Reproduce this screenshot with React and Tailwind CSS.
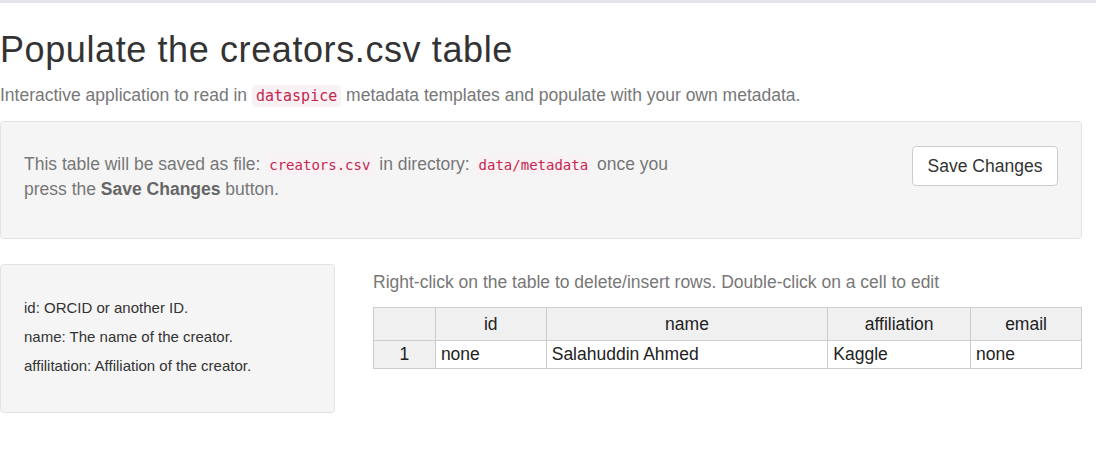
import React from "react";

const Code = ({ size = "text-[14px]", children }) => (
  <code
    className={`${size} rounded-[4px] bg-[#f9f2f4] px-[4px] py-[2px] font-['DejaVu_Sans_Mono','Liberation_Mono',monospace] text-[#c7254e]`}
  >
    {children}
  </code>
);

const columns = [
  { key: "id", w: "w-[111px]" },
  { key: "name", w: "w-[282px]" },
  { key: "affiliation", w: "w-[143px]" },
  { key: "email", w: "w-[111px]" },
];

const rows = [
  { id: "none", name: "Salahuddin Ahmed", affiliation: "Kaggle", email: "none" },
];

export default function App() {
  return (
    <div className="min-h-[467px] border-t-[3px] border-[#e3e3e8] bg-white pr-[14px] font-['Liberation_Sans',Arial,sans-serif] text-[#333]">
      {/* page title */}
      <h1 className="mt-[27px] text-[36px] leading-[40px] tracking-[0.6px] text-[#333]">
        Populate the creators.csv table
      </h1>
      <p className="mt-[14px] text-[17.5px] leading-[22px] text-[#777]">
        Interactive application to read in{" "}
        <Code size="text-[15px]">dataspice</Code> metadata templates and
        populate with your own metadata.
      </p>

      {/* save panel */}
      <div className="mt-[14px] flex h-[118px] items-start justify-between rounded-[4px] border border-[#e3e3e3] bg-[#f5f5f5] pl-[23px] pr-[23px] pt-[24px]">
        <p className="mt-[6px] w-[670px] text-[17.5px] leading-[24px] text-[#777]">
          This table will be saved as file: <Code>creators.csv</Code> in
          directory: <Code>data/metadata</Code> once you press the{" "}
          <b className="text-[#666]">Save Changes</b> button.
        </p>
        <button className="h-[40px] w-[146px] rounded-[4px] border border-[#ccc] bg-white text-[17.5px] text-[#333]">
          Save Changes
        </button>
      </div>

      <div className="mt-[25px] flex gap-[38px]">
        {/* column help */}
        <div className="flex h-[149px] w-[335px] flex-col gap-[9px] rounded-[4px] border border-[#e3e3e3] bg-[#f5f5f5] pl-[23px] pt-[33px] text-[15px] leading-[20px] text-[#333]">
          <p>id: ORCID or another ID.</p>
          <p>name: The name of the creator.</p>
          <p>affilitation: Affiliation of the creator.</p>
        </div>

        <div className="flex-1">
          <p className="mt-[7px] text-[17.5px] leading-[22px] text-[#777]">
            Right-click on the table to delete/insert rows. Double-click on a
            cell to edit
          </p>
          <table className="mt-[14px] border-collapse text-[17.5px] text-[#222]">
            <thead>
              <tr className="h-[33px] bg-[#f0f0f0]">
                <th className="w-[62px] border border-[#ccc] font-normal" />
                {columns.map((c) => (
                  <th
                    key={c.key}
                    className={`${c.w} border border-[#ccc] text-center font-normal`}
                  >
                    {c.key}
                  </th>
                ))}
              </tr>
            </thead>
            <tbody>
              {rows.map((r, i) => (
                <tr key={i} className="h-[28px]">
                  <td className="border border-[#ccc] bg-[#f0f0f0] text-center">
                    {i + 1}
                  </td>
                  {columns.map((c) => (
                    <td key={c.key} className="border border-[#ccc] px-[5px]">
                      {r[c.key]}
                    </td>
                  ))}
                </tr>
              ))}
            </tbody>
          </table>
        </div>
      </div>
    </div>
  );
}
